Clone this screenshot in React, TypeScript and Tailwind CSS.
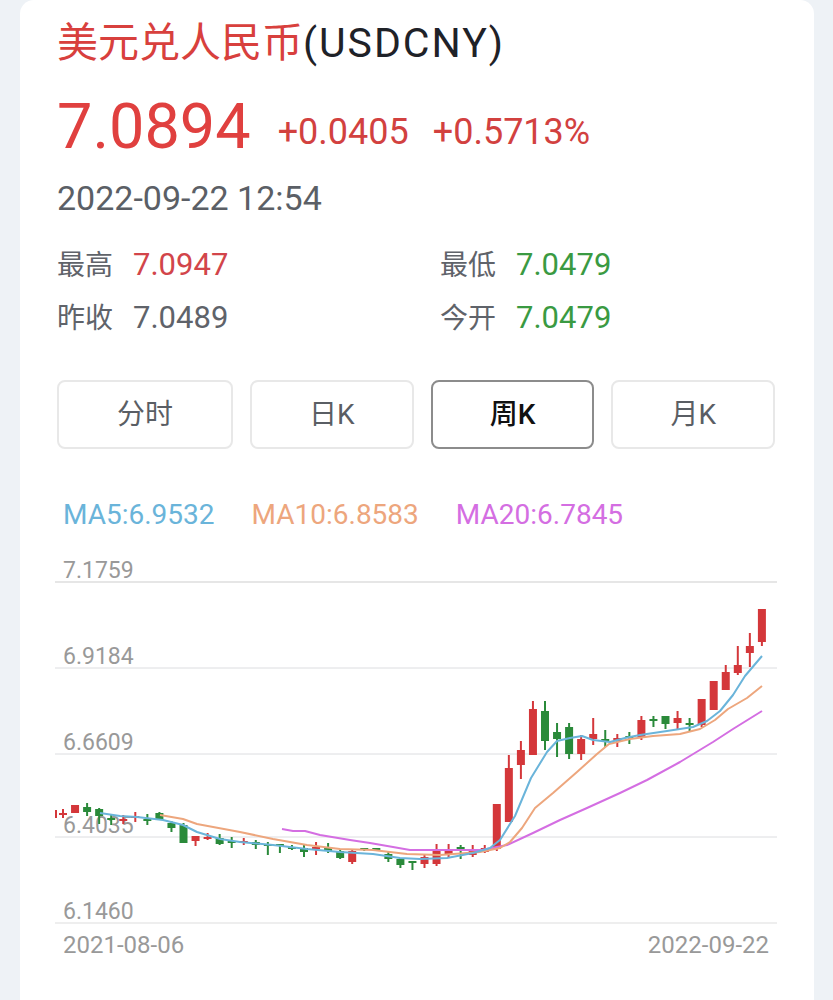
import React from "react";

const RED = "#d4373a";
const GREEN = "#2a8a3a";

// [color, bodyTop, bodyBottom, high, low] in page pixels
type Candle = ["r" | "g", number, number, number, number];

const candles: Candle[] = [
  ["r", 811, 813, 807, 816],
  ["r", 803, 811, 803, 811],
  ["g", 805, 810, 801, 814],
  ["g", 807, 814, 806, 822],
  ["g", 816, 818, 812, 823],
  ["r", 817, 819, 813, 822],
  ["r", 814, 816, 810, 820],
  ["g", 817, 819, 812, 823],
  ["g", 811, 818, 810, 818],
  ["g", 821, 826, 819, 830],
  ["g", 823, 841, 821, 841],
  ["r", 834, 839, 834, 844],
  ["r", 835, 837, 831, 838],
  ["g", 836, 842, 832, 843],
  ["g", 839, 841, 835, 846],
  ["r", 839, 841, 836, 843],
  ["g", 840, 843, 838, 847],
  ["g", 842, 844, 840, 853],
  ["g", 842, 844, 842, 851],
  ["g", 845, 847, 843, 848],
  ["g", 846, 850, 843, 855],
  ["r", 845, 847, 840, 853],
  ["g", 845, 849, 841, 851],
  ["g", 849, 856, 848, 857],
  ["r", 849, 860, 848, 862],
  ["g", 846, 848, 846, 849],
  ["g", 846, 848, 846, 849],
  ["g", 852, 857, 850, 860],
  ["g", 857, 863, 856, 866],
  ["g", 859, 861, 859, 868],
  ["r", 855, 862, 853, 866],
  ["r", 848, 862, 842, 864],
  ["r", 848, 853, 842, 855],
  ["g", 845, 847, 843, 857],
  ["r", 848, 853, 843, 855],
  ["r", 846, 850, 843, 851],
  ["r", 802, 847, 802, 849],
  ["r", 766, 820, 753, 820],
  ["r", 748, 763, 739, 777],
  ["r", 707, 753, 699, 753],
  ["g", 709, 739, 699, 748],
  ["g", 730, 737, 721, 755],
  ["g", 725, 752, 721, 757],
  ["r", 737, 752, 733, 758],
  ["r", 732, 737, 716, 743],
  ["g", 737, 739, 728, 745],
  ["r", 736, 739, 732, 745],
  ["g", 734, 736, 730, 742],
  ["r", 718, 735, 714, 738],
  ["g", 717, 719, 714, 725],
  ["g", 714, 722, 714, 727],
  ["r", 716, 721, 709, 728],
  ["g", 721, 723, 716, 730],
  ["r", 697, 723, 697, 725],
  ["r", 679, 708, 679, 708],
  ["r", 670, 688, 663, 688],
  ["r", 663, 671, 644, 673],
  ["r", 644, 651, 631, 665],
  ["r", 607, 640, 607, 644],
];

const ma5 = [
  [100, 811], [120, 814], [137, 815], [163, 818], [175, 821], [183, 823], [197, 830],
  [220, 837], [240, 840], [273, 843], [307, 847], [340, 850], [373, 852], [400, 856],
  [420, 857], [447, 856], [473, 851], [490, 846], [500, 838], [515, 814], [531, 776],
  [547, 750], [557, 739], [570, 736], [582, 734], [593, 738], [610, 740], [625, 736],
  [640, 733], [667, 729], [693, 725], [707, 719], [720, 709], [733, 693], [745, 674],
  [762, 654],
];

const ma10 = [
  [160, 813], [183, 817], [197, 822], [240, 830], [273, 837], [307, 843], [340, 847],
  [373, 848], [407, 852], [440, 853], [480, 850], [500, 846], [510, 840], [522, 826],
  [535, 806], [553, 791], [577, 770], [597, 752], [609, 742], [630, 737], [653, 734],
  [680, 732], [700, 727], [715, 718], [728, 707], [747, 696], [762, 684],
];

const ma20 = [
  [282, 827], [293, 829], [305, 829], [320, 833], [350, 838], [370, 841], [393, 845],
  [410, 848], [433, 848], [460, 848], [482, 848], [492, 846], [507, 843], [533, 831],
  [560, 818], [587, 806], [620, 791], [647, 778], [680, 760], [713, 740], [733, 727],
  [762, 709],
];

const pts = (list: number[][]) => list.map((p) => p.join(",")).join(" ");

const grid = [
  { y: 580, label: "7.1759", color: "#e6e6e6", w: 2 },
  { y: 666, label: "6.9184", color: "#dcdde0", w: 1 },
  { y: 752, label: "6.6609", color: "#dcdde0", w: 1 },
  { y: 835, label: "6.4035", color: "#dcdde0", w: 1 },
  { y: 921, label: "6.1460", color: "#eeeeee", w: 2 },
];

function KChart() {
  const x0 = 63;
  const step = 12.05;
  return (
    <svg width={718} height={420} className="block overflow-visible">
      <g transform="translate(-57 -540)" fontFamily="Roboto, sans-serif">
        {grid.map((g) => (
          <line key={g.y} x1={55} x2={777} y1={g.y} y2={g.y} stroke={g.color} strokeWidth={g.w} />
        ))}
        {grid.map((g) => (
          <text key={g.label} x={63} y={g.y - 4} fontSize={23} fill="#999999">
            {g.label}
          </text>
        ))}

        {/* partial candle at the left edge */}
        <line x1={56} x2={56} y1={808} y2={816} stroke={RED} strokeWidth={2} />

        {candles.map((c, i) => {
          const x = x0 + step * i;
          const color = c[0] === "r" ? RED : GREEN;
          const h = Math.max(c[2] - c[1], 2);
          return (
            <g key={i}>
              <line x1={x} x2={x} y1={c[3]} y2={c[4]} stroke={color} strokeWidth={2} />
              <rect x={x - 4} y={c[1]} width={8} height={h} fill={color} />
            </g>
          );
        })}

        <polyline points={pts(ma20)} fill="none" stroke="#d46ee2" strokeWidth={2} strokeLinejoin="round" />
        <polyline points={pts(ma10)} fill="none" stroke="#eda67d" strokeWidth={2} strokeLinejoin="round" />
        <polyline points={pts(ma5)} fill="none" stroke="#6ab4da" strokeWidth={2} strokeLinejoin="round" />

        <text x={63} y={951} fontSize={24} fill="#999999">
          2021-08-06
        </text>
        <text x={769} y={951} fontSize={24} fill="#999999" textAnchor="end">
          2022-09-22
        </text>
      </g>
    </svg>
  );
}

function Stat({ label, value, color }: { label: string; value: string; color: string }) {
  return (
    <div className="flex items-baseline gap-[20px]">
      <span className="text-[28px] text-[#5f636a]">{label}</span>
      <span className={`text-[31px] ${color}`}>{value}</span>
    </div>
  );
}

const tabs = ["分时", "日K", "周K", "月K"];

export default function App() {
  return (
    <div className="min-h-screen bg-[#eef2f6] pl-[20px] pr-[19px] font-['Roboto','Noto_Sans_CJK_SC',sans-serif]">
      <div className="min-h-screen rounded-t-[14px] bg-white pl-[37px] pr-[39px]">
        {/* Title */}
        <h1 className="pt-[15px] text-[41px] leading-[56px] text-[#d8403d]">
          美元兑人民币<span className="tracking-[2px] text-[#1f2228]">(USDCNY)</span>
        </h1>

        {/* Price */}
        <div className="mt-[24px] flex items-end">
          <span className="text-[63px] leading-[63px] text-[#e0403f]">7.0894</span>
          <span className="mb-[8px] ml-[27px] text-[36px] leading-[36px] text-[#d2413f]">+0.0405</span>
          <span className="mb-[8px] ml-[24px] text-[36px] leading-[36px] text-[#d2413f]">+0.5713%</span>
        </div>

        <div className="mt-[23px] text-[34px] leading-[34px] text-[#5b5f66]">2022-09-22 12:54</div>

        {/* Stats */}
        <div className="mt-[24px] grid grid-cols-[383px_1fr] leading-[52px]">
          <Stat label="最高" value="7.0947" color="text-[#d2454a]" />
          <Stat label="最低" value="7.0479" color="text-[#3a9a42]" />
          <Stat label="昨收" value="7.0489" color="text-[#5f636a]" />
          <Stat label="今开" value="7.0479" color="text-[#3a9a42]" />
        </div>

        {/* Period tabs */}
        <div className="mt-[35px] grid grid-cols-[176px_1fr_1fr_1fr] gap-[17px]">
          {tabs.map((t) => (
            <div
              key={t}
              className={
                t === "周K"
                  ? "flex h-[69px] items-center justify-center rounded-[8px] border-2 border-[#8c8c8c] text-[28px] font-medium text-[#111111]"
                  : "flex h-[69px] items-center justify-center rounded-[8px] border-2 border-[#e8e8e8] text-[28px] text-[#5a5e64]"
              }
            >
              {t}
            </div>
          ))}
        </div>

        {/* MA legend */}
        <div className="mt-[52px] flex gap-[37px] pl-[6px] text-[28px] leading-[28px]">
          <span className="text-[#6ab4da]">MA5:6.9532</span>
          <span className="text-[#eda67d]">MA10:6.8583</span>
          <span className="text-[#d46ee2]">MA20:6.7845</span>
        </div>

        <div className="mt-[13px]">
          <KChart />
        </div>
      </div>
    </div>
  );
}
